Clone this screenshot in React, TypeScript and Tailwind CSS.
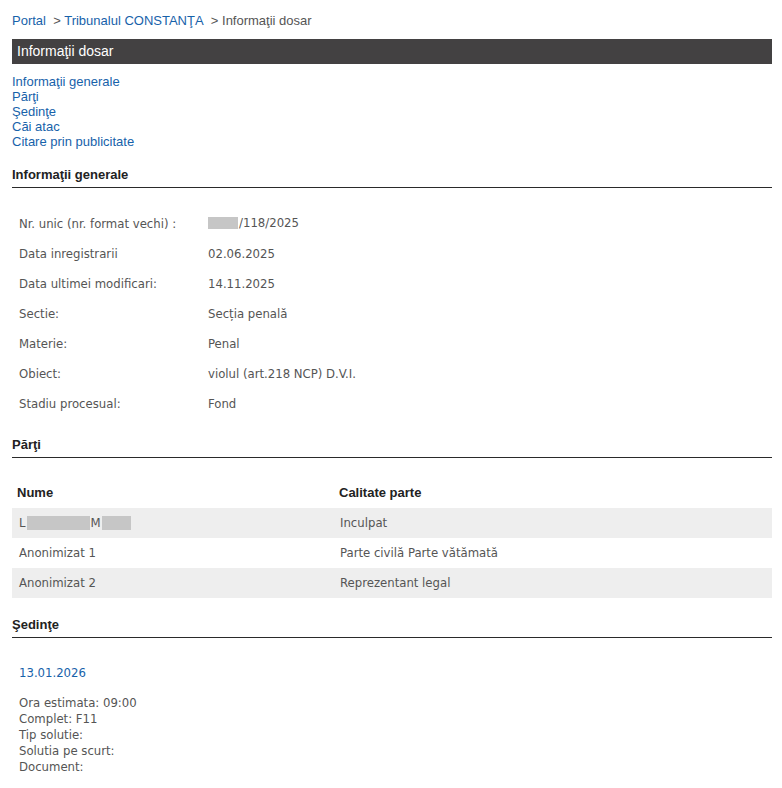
import React from "react";

const info: [string, React.ReactNode][] = [
  [
    "Nr. unic (nr. format vechi) :",
    <span className="inline-flex items-center">
      <span className="inline-block w-[30px] h-[12px] bg-[#c6c6c6] mr-[1px]" />
      /118/2025
    </span>,
  ],
  ["Data inregistrarii", "02.06.2025"],
  ["Data ultimei modificari:", "14.11.2025"],
  ["Sectie:", "Secția penală"],
  ["Materie:", "Penal"],
  ["Obiect:", "violul (art.218 NCP) D.V.I."],
  ["Stadiu procesual:", "Fond"],
];

const parti: [React.ReactNode, string][] = [
  [
    <span className="inline-flex items-center">
      L<span className="inline-block w-[63px] h-[14px] bg-[#c6c6c6] ml-[1px]" />
      <span className="ml-[1px]">M</span>
      <span className="inline-block w-[29px] h-[14px] bg-[#c6c6c6] ml-[1px]" />
    </span>,
    "Inculpat",
  ],
  ["Anonimizat 1", "Parte civilă Parte vătămată"],
  ["Anonimizat 2", "Reprezentant legal"],
];

const data = "font-['DejaVu_Sans_Condensed','DejaVu_Sans',sans-serif] text-[13px] text-[#555]";

function Heading({ children, mt }: { children: React.ReactNode; mt: string }) {
  return (
    <div className={`${mt} h-[21px] border-b border-[#2a2a2a] text-[13px] leading-[16px] font-bold text-[#222]`}>
      {children}
    </div>
  );
}

export default function App() {
  return (
    <div className="bg-white min-h-[788px] pl-[12px] w-[772px] font-['Liberation_Sans',Arial,sans-serif]">
      {/* Breadcrumb */}
      <div className="pt-[13px] h-[29px] text-[13px] leading-[16px] text-[#555] whitespace-pre">
        <a className="text-[#1762aa]">Portal</a>
        {"\u00a0 > "}
        <a className="text-[#1762aa]">Tribunalul CONSTANŢA</a>
        {"\u00a0 > "}Informaţii dosar
      </div>

      {/* Title bar */}
      <div className="mt-[10px] h-[25px] bg-[#434142] pl-[5px] text-[14px] leading-[25px] text-white">
        Informaţii dosar
      </div>

      {/* Nav */}
      <div className="mt-[10px] flex flex-col text-[13px] leading-[15px] text-[#1762aa]">
        <a>Informaţii generale</a>
        <a>Părţi</a>
        <a>Şedinţe</a>
        <a>Căi atac</a>
        <a>Citare prin publicitate</a>
      </div>

      <Heading mt="mt-[18px]">Informaţii generale</Heading>

      <div className={`mt-[21px] ${data}`}>
        {info.map(([k, v], i) => (
          <div key={i} className="flex h-[30px] items-center">
            <div className="w-[196px] pl-[7px]">{k}</div>
            <div>{v}</div>
          </div>
        ))}
      </div>

      <Heading mt="mt-[18px]">Părţi</Heading>

      <div className="mt-[20px]">
        <div className="flex h-[30px] items-center text-[13px] font-bold text-[#222]">
          <div className="w-[327px] pl-[5px]">Nume</div>
          <div>Calitate parte</div>
        </div>
        {parti.map(([n, c], i) => (
          <div
            key={i}
            className={`flex h-[30px] items-center ${data} ${i % 2 === 0 ? "bg-[#eeeeee]" : "bg-white"}`}
          >
            <div className="w-[328px] pl-[7px]">{n}</div>
            <div>{c}</div>
          </div>
        ))}
      </div>

      <Heading mt="mt-[19px]">Şedinţe</Heading>

      <div className={`pl-[7px] ${data} leading-[16px]`}>
        <div className="mt-[27px] text-[#1762aa]">13.01.2026</div>
        <div className="mt-[14px] flex flex-col">
          <span>Ora estimata: 09:00</span>
          <span>Complet: F11</span>
          <span>Tip solutie:</span>
          <span>Solutia pe scurt:</span>
          <span>Document:</span>
        </div>
      </div>
    </div>
  );
}
